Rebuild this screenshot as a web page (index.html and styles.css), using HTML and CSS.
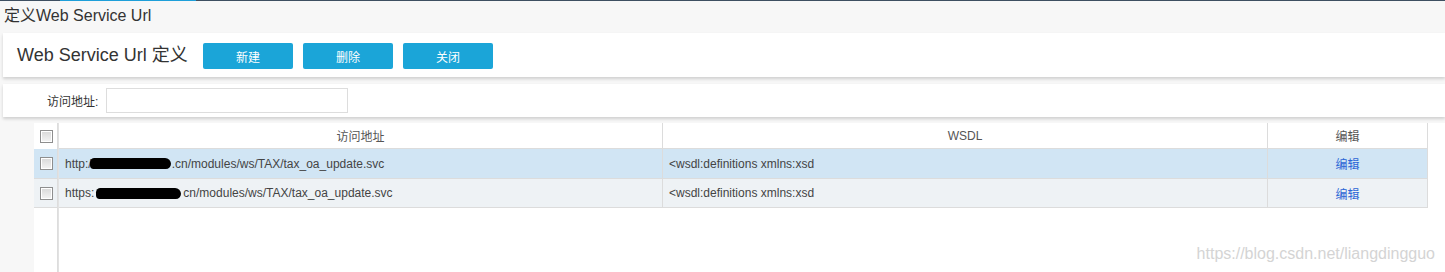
FILE: index.html
```html
<!DOCTYPE html>
<html lang="zh-CN">
<head>
<meta charset="utf-8">
<title>定义Web Service Url</title>
<link rel="stylesheet" href="styles.css">
</head>
<body>
<div class="topline"><span class="tl-dark tl-left"></span><span class="tl-blue"></span><span class="tl-dark tl-rest"></span></div>
<div class="page-title">定义Web Service Url</div>
<div class="panel toolbar">
  <h2 class="heading">Web Service Url 定义</h2>
  <div class="buttons">
    <button class="btn">新建</button>
    <button class="btn">删除</button>
    <button class="btn">关闭</button>
  </div>
</div>
<div class="panel search">
  <label class="search-label">访问地址:</label>
  <input class="search-input" type="text">
</div>
<div class="grid-wrap">
  <div class="frozen">
    <div class="fcell fhead"><span class="cb"></span></div>
    <div class="fcell frow sel"><span class="cb"></span></div>
    <div class="fcell frow alt"><span class="cb"></span></div>
  </div>
  <div class="main">
    <div class="row head">
      <div class="cell c1 center">访问地址</div>
      <div class="cell c2 center">WSDL</div>
      <div class="cell c3 center">编辑</div>
    </div>
    <div class="row sel">
      <div class="cell c1">http:/<span class="blob b1"></span>.cn/modules/ws/TAX/tax_oa_update.svc</div>
      <div class="cell c2">&lt;wsdl:definitions xmlns:xsd</div>
      <div class="cell c3 center"><a class="link">编辑</a></div>
    </div>
    <div class="row alt">
      <div class="cell c1">https:<span class="blob b2"></span>cn/modules/ws/TAX/tax_oa_update.svc</div>
      <div class="cell c2">&lt;wsdl:definitions xmlns:xsd</div>
      <div class="cell c3 center"><a class="link">编辑</a></div>
    </div>
  </div>
</div>
<div class="watermark">https://blog.csdn.net/liangdingguo</div>
</body>
</html>
```
FILE: styles.css
```css
* { box-sizing: border-box; }
html, body { height: 100%; }
body {
  margin: 0;
  background: #f7f7f7;
  font-family: "Liberation Sans", Arial, "Noto Sans CJK SC", sans-serif;
  color: #333;
  overflow: hidden;
  position: relative;
}
.topline { display: flex; height: 1px; }
.tl-dark { background: #3e4f61; }
.tl-left { width: 60px; }
.tl-blue { width: 136px; background: #1e9fd9; }
.tl-rest { flex: 1; }
.page-title {
  height: 32px;
  line-height: 30px;
  padding-left: 4px;
  font-size: 16px;
  color: #333;
}
.panel {
  margin-left: 3px;
  background: #fff;
  box-shadow: 0 2px 3px rgba(0,0,0,0.16);
}
.toolbar {
  height: 44px;
  display: flex;
  align-items: flex-start;
  padding-left: 14px;
}
.heading {
  margin: 0;
  width: 186px;
  font-size: 18px;
  font-weight: normal;
  line-height: 44px;
  color: #333;
}
.buttons { display: flex; gap: 10px; padding-top: 10px; }
.btn {
  width: 90px;
  height: 26px;
  border: none;
  border-radius: 2px;
  background: #1ba5d8;
  color: #fff;
  font-family: "Liberation Sans", "Noto Sans CJK SC", sans-serif;
  font-size: 12px;
  padding: 0;
}
.search {
  margin-top: 7px;
  height: 33px;
  display: flex;
  align-items: center;
  padding-left: 44px;
}
.search-label { font-size: 12px; color: #333; width: 59px; }
.search-input {
  width: 242px;
  height: 25px;
  border: 1px solid #ddd;
  background: #fff;
  margin: 0;
}
.grid-wrap {
  margin-top: 6px;
  margin-left: 34px;
  background: #fff;
  display: flex;
  height: 149px;
}
.frozen {
  width: 24px;
  border-right: 1px solid #ddd;
}
.fcell {
  display: flex;
  align-items: center;
  justify-content: center;
  padding-left: 1px;
}
.fhead { height: 26px; }
.frow { height: 30px; border-bottom: 1px solid #dcdcdc; }
.frow.alt { height: 29px; }
.cb {
  width: 13px;
  height: 13px;
  border: 1px solid #8e8e8e;
  background: linear-gradient(#d8d8d8, #f4f4f4);
  box-shadow: inset 0 0 0 1px #fff;
}
.main {
  border-left: 1px solid #e2e2e2;
  width: 1370px;
}
.row { display: flex; border-bottom: 1px solid #dcdcdc; }
.row.head { height: 26px; background: #fff; }
.row.sel { height: 30px; background: #d1e5f4; }
.row.alt { height: 29px; background: #eef2f5; }
.frow.sel { background: #d1e5f4; }
.frow.alt { background: #eef2f5; }
.cell {
  display: flex;
  align-items: center;
  font-size: 12px;
  color: #444;
  padding-left: 6px;
  border-right: 1px solid #dcdcdc;
  white-space: nowrap;
}
.head .cell { color: #555; }
.center { justify-content: center; padding-left: 0; }
.c1 { width: 604px; }
.c2 { width: 605px; }
.c3 { width: 160px; }
.link { color: #2b66d6; text-decoration: none; }
.blob {
  display: inline-block;
  height: 11px;
  background: #000;
  border-radius: 6px 8px 7px 5px;
}
.b1 { width: 81px; margin: 0 1px 0 -2px; }
.b2 { width: 85px; margin: 0 2px 0 2px; }
.watermark {
  position: absolute;
  right: 10px;
  top: 245px;
  font-size: 16px;
  color: #d4d4d4;
}
```
